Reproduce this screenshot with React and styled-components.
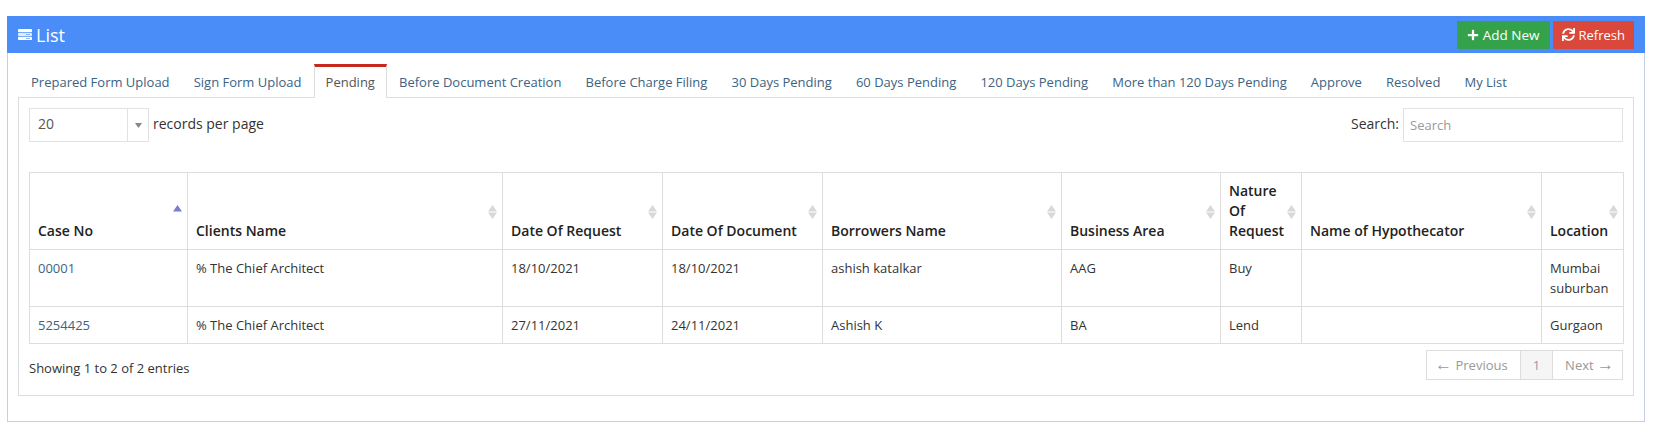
import React from 'react';
import styled, { createGlobalStyle } from 'styled-components';
import { FaPlus, FaSync } from 'react-icons/fa';

const tabs = [
  'Prepared Form Upload',
  'Sign Form Upload',
  'Pending',
  'Before Document Creation',
  'Before Charge Filing',
  '30 Days Pending',
  '60 Days Pending',
  '120 Days Pending',
  'More than 120 Days Pending',
  'Approve',
  'Resolved',
  'My List',
];

const columns = [
  { title: 'Case No', width: 158, active: true },
  { title: 'Clients Name', width: 315 },
  { title: 'Date Of Request', width: 160 },
  { title: 'Date Of Document', width: 160 },
  { title: 'Borrowers Name', width: 239 },
  { title: 'Business Area', width: 159 },
  { title: 'Nature Of Request', width: 81 },
  { title: 'Name of Hypothecator', width: 240 },
  { title: 'Location', width: 82 },
];

const rows = [
  ['00001', '% The Chief Architect', '18/10/2021', '18/10/2021', 'ashish katalkar', 'AAG', 'Buy', '', 'Mumbai suburban'],
  ['5254425', '% The Chief Architect', '27/11/2021', '24/11/2021', 'Ashish K', 'BA', 'Lend', '', 'Gurgaon'],
];

const ListIcon = () => (
  <svg width="14" height="11" viewBox="0 0 14 11">
    <rect x="0" y="0" width="14" height="3.2" rx="0.8" fill="#fff" />
    <rect x="0" y="3.9" width="14" height="3.2" rx="0.8" fill="#dfeafd" />
    <rect x="0" y="7.8" width="14" height="3.2" rx="0.8" fill="#fff" />
    <rect x="8" y="5" width="4" height="1" fill="#8db6fa" />
    <rect x="8" y="9" width="4" height="1" fill="#8db6fa" />
  </svg>
);

const SortIcon = ({ active }) => (
  <SortMark width="9" height="14" viewBox="0 0 9 14">
    <path d="M4.5 0 L9 6.5 L0 6.5 Z" fill={active ? '#7b7bcf' : '#d8d8d8'} />
    {!active && <path d="M0 7.5 L9 7.5 L4.5 14 Z" fill="#d8d8d8" />}
  </SortMark>
);

const App = () => (
  <>
    <GlobalStyle />
    <Panel>
      <PanelHeader>
        <PanelTitle>
          <ListIcon />
          List
        </PanelTitle>
        <HeaderActions>
          <ActionButton $bg="#34a24a" $size="13.5px" $pad="10px"><FaPlus size={12} />Add New</ActionButton>
          <ActionButton $bg="#d9483b" $size="13px" $pad="9px"><FaSync size={13} />Refresh</ActionButton>
        </HeaderActions>
      </PanelHeader>
      <PanelBody>
        <Tabs>
          {tabs.map((tab) => (
            <Tab key={tab} $active={tab === 'Pending'}>{tab}</Tab>
          ))}
        </Tabs>
        <TabContent>
          <Controls>
            <LengthControl>
              <FakeSelect>
                <span>20</span>
                <SelectArrow>
                  <svg width="7" height="5" viewBox="0 0 7 5"><path d="M0 0 L7 0 L3.5 5 Z" fill="#888" /></svg>
                </SelectArrow>
              </FakeSelect>
              <LengthLabel>records per page</LengthLabel>
            </LengthControl>
            <SearchControl>
              <SearchLabel>Search:</SearchLabel>
              <SearchInput placeholder="Search" />
            </SearchControl>
          </Controls>
          <DataTable>
            <colgroup>
              {columns.map((col) => <col key={col.title} style={{ width: col.width }} />)}
            </colgroup>
            <thead>
              <tr>
                {columns.map((col) => (
                  <HeadCell key={col.title}>
                    {col.title}
                    <SortIcon active={col.active} />
                  </HeadCell>
                ))}
              </tr>
            </thead>
            <tbody>
              {rows.map((row) => (
                <tr key={row[0]}>
                  {row.map((cell, i) => (
                    <BodyCell key={i}>{i === 0 ? <CaseLink>{cell}</CaseLink> : cell}</BodyCell>
                  ))}
                </tr>
              ))}
            </tbody>
          </DataTable>
          <TableFooter>
            <Info>Showing 1 to 2 of 2 entries</Info>
            <Pagination>
              <PageItem $left="8px" $right="12px"><Arrow>←</Arrow> Previous</PageItem>
              <PageItem $current>1</PageItem>
              <PageItem $left="12px" $right="8px">Next <Arrow>→</Arrow></PageItem>
            </Pagination>
          </TableFooter>
        </TabContent>
      </PanelBody>
    </Panel>
  </>
);

const GlobalStyle = createGlobalStyle`
  html, body {
    margin: 0;
    background: #fff;
  }
  body {
    padding: 16px 15px 0 7px;
    font-family: "Open Sans", "Liberation Sans", sans-serif;
    font-size: 13px;
    color: #333;
  }
`;

const Panel = styled.div`
  width: 1638px;
  box-sizing: border-box;
  border: 1px solid #c3d0e2;
  border-top: none;
  height: 406px;
`;

const PanelHeader = styled.div`
  height: 37px;
  margin: 0 -1px;
  padding: 0 11px;
  background: #4a8df8;
  color: #fff;
  display: flex;
  align-items: center;
  justify-content: space-between;
`;

const PanelTitle = styled.div`
  display: flex;
  align-items: center;
  gap: 4px;
  font-size: 18px;
`;

const HeaderActions = styled.div`
  display: flex;
  gap: 3px;
`;

const ActionButton = styled.button`
  height: 28px;
  border: none;
  padding: 0 ${(p) => p.$pad} 0 ${(p) => p.$pad};
  background: ${(p) => p.$bg};
  color: #fff;
  font-family: inherit;
  font-size: ${(p) => p.$size};
  display: flex;
  align-items: center;
  gap: 4px;
`;

const PanelBody = styled.div`
  padding: 11px 10px 0;
`;

const Tabs = styled.div`
  display: flex;
  height: 33px;
  margin-left: 1px;
`;

const Tab = styled.div`
  box-sizing: border-box;
  height: ${(p) => (p.$active ? '34px' : '33px')};
  padding: 6px 11.05px 0;
  font-size: 13px;
  line-height: 18px;
  white-space: nowrap;
  color: ${(p) => (p.$active ? '#555' : '#3c6382')};
  background: #fff;
  position: relative;
  z-index: 1;
  border: 1px solid ${(p) => (p.$active ? '#ddd' : 'transparent')};
  border-bottom: none;
  border-top: 3px solid ${(p) => (p.$active ? '#c5291c' : 'transparent')};
`;

const TabContent = styled.div`
  box-sizing: border-box;
  height: 299px;
  padding: 10px 10px 0;
  border: 1px solid #ddd;
`;

const Controls = styled.div`
  display: flex;
  justify-content: space-between;
  align-items: flex-start;
  height: 64px;
`;

const LengthControl = styled.div`
  display: flex;
  align-items: center;
  gap: 4px;
  font-size: 14px;
  height: 34px;
`;

const LengthLabel = styled.span`
  padding-bottom: 3px;
`;

const FakeSelect = styled.div`
  box-sizing: border-box;
  width: 120px;
  height: 34px;
  border: 1px solid #e2e2e2;
  display: flex;
  justify-content: space-between;
  align-items: center;
  padding-left: 8px;
  color: #555;
  & > span {
    padding-bottom: 3px;
  }
`;

const SelectArrow = styled.div`
  width: 20px;
  height: 100%;
  border-left: 1px solid #e2e2e2;
  display: flex;
  align-items: center;
  justify-content: center;
`;

const SearchControl = styled.label`
  display: flex;
  align-items: center;
  gap: 4px;
  font-size: 14px;
  height: 34px;
`;

const SearchLabel = styled.span`
  padding-bottom: 3px;
`;

const SearchInput = styled.input`
  box-sizing: border-box;
  width: 220px;
  height: 34px;
  border: 1px solid #e2e2e2;
  padding: 0 6px;
  font-family: inherit;
  font-size: 13px;
  &::placeholder {
    color: #999;
  }
`;

const DataTable = styled.table`
  width: 100%;
  table-layout: fixed;
  border-collapse: collapse;
`;

const HeadCell = styled.th`
  position: relative;
  border: 1px solid #ddd;
  padding: 8px;
  font-size: 14px;
  font-weight: 600;
  line-height: 20px;
  text-align: left;
  vertical-align: bottom;
  color: #222;
`;

const SortMark = styled.svg`
  position: absolute;
  right: 5px;
  top: 32px;
`;

const BodyCell = styled.td`
  border: 1px solid #ddd;
  padding: 8px;
  font-size: 13px;
  line-height: 20px;
  vertical-align: top;
`;

const CaseLink = styled.a`
  color: #3c6382;
`;

const TableFooter = styled.div`
  display: flex;
  justify-content: space-between;
  padding-top: 6px;
`;

const Info = styled.div`
  padding-top: 9px;
  font-size: 13px;
`;

const Pagination = styled.div`
  display: flex;
  height: 30px;
  border: 1px solid #ddd;
  box-sizing: border-box;
`;

const PageItem = styled.div`
  padding: 0 ${(p) => p.$right || '12px'} 0 ${(p) => p.$left || '12px'};
  line-height: 28px;
  font-size: 13px;
  color: #999;
  background: ${(p) => (p.$current ? '#f5f5f5' : '#fff')};
  border-left: ${(p) => (p.$current ? '1px solid #ddd' : 'none')};
  border-right: ${(p) => (p.$current ? '1px solid #ddd' : 'none')};
`;

const Arrow = styled.span`
  font-family: "Liberation Sans", sans-serif;
  font-size: 17px;
  line-height: 1;
`;

export default App;
